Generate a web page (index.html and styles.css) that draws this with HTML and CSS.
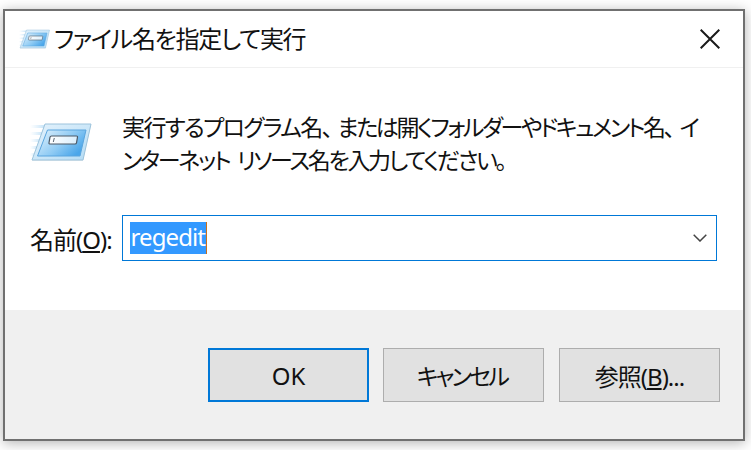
FILE: index.html
```html
<!DOCTYPE html>
<html lang="ja">
<head>
  <meta charset="UTF-8" />
  <meta name="viewport" content="width=device-width, initial-scale=1.0" />
  <title>ファイル名を指定して実行</title>
  <link rel="stylesheet" href="styles.css">
</head>
<body>
  <svg class="defs" width="0" height="0">
    <defs>
      <linearGradient id="frameFill" x1="0" y1="0" x2="1" y2="1">
        <stop offset="0" stop-color="#e4f2fc" />
        <stop offset="1" stop-color="#b4dcf5" />
      </linearGradient>
      <linearGradient id="panelFill" x1="0" y1="0" x2="1" y2="0.6">
        <stop offset="0" stop-color="#e6f4fd" />
        <stop offset="0.6" stop-color="#8fcbf4" />
        <stop offset="1" stop-color="#4aa6ea" />
      </linearGradient>
      <linearGradient id="fieldFill" x1="0" y1="0" x2="1" y2="0">
        <stop offset="0" stop-color="#ffffff" />
        <stop offset="1" stop-color="#d9eefc" />
      </linearGradient>
      <linearGradient id="streakFill" x1="0" y1="0" x2="1" y2="0">
        <stop offset="0" stop-color="#cfe8f9" stop-opacity="0" />
        <stop offset="1" stop-color="#bfe0f7" />
      </linearGradient>
      <symbol id="runIcon" viewBox="0 0 64 40">
        <rect x="0" y="3" width="16" height="3" fill="url(#streakFill)" />
        <rect x="0" y="10" width="14" height="3" fill="url(#streakFill)" />
        <rect x="0" y="17" width="12" height="3" fill="url(#streakFill)" />
        <rect x="0" y="24" width="9" height="3" fill="url(#streakFill)" />
        <rect x="0" y="31" width="7" height="3" fill="url(#streakFill)" />
        <path d="M15 2H61L53 38H2Z" fill="#d4d8dc" opacity="0.5" transform="translate(0 1)" />
        <path d="M15 2H61L53 38H2Z" fill="url(#frameFill)" stroke="#9cc3dc" stroke-width="1" stroke-linejoin="round" />
        <path d="M17.500 8H56L50 34H7.500Z" fill="url(#panelFill)" stroke="#5aa5de" stroke-width="1" />
        <path d="M21.500 14H46.500C47.300 14 47.700 14.400 47.500 15.200L46.500 20.800C46.300 21.600 45.900 22 45 22H20C19.200 22 18.800 21.600 19 20.800L20 15.200C20.200 14.400 20.600 14 21.500 14Z" fill="url(#fieldFill)" stroke="#4d5a68" stroke-width="1.200" />
        <path d="M24.300 16L23.300 20" stroke="#5a6672" stroke-width="1" fill="none" />
      </symbol>
    </defs>
  </svg>

  <div class="dialog">
    <div class="titlebar">
      <svg class="title-icon"><use href="#runIcon" /></svg>
      <span class="title-text">ファイル名を指定して実行</span>
      <svg class="close-icon" viewBox="0 0 20 20">
        <path d="M0.700 0.700L19.300 19.300M19.300 0.700L0.700 19.300" stroke="#1a1a1a" stroke-width="2" fill="none" />
      </svg>
    </div>

    <div class="content">
      <div class="message-row">
        <svg class="run-icon"><use href="#runIcon" /></svg>
        <p class="message">
          <span class="line">実行するプログラム名<span class="comma">、</span><span class="tight">または開くフォルダーやドキュメント名</span><span class="comma">、</span>イ</span>
          <span class="line line-second">ンターネット リソース名を入力してください。</span>
        </p>
      </div>
      <div class="field-row">
        <label class="field-label">名前(<u>O</u>):</label>
        <div class="combo">
          <span class="combo-value">regedit</span>
          <svg class="chevron" viewBox="0 0 14 8">
            <path d="M0.700 0.700L7 7L13.300 0.700" stroke="#444" stroke-width="1.500" fill="none" />
          </svg>
        </div>
      </div>
    </div>

    <div class="footer">
      <button class="btn btn-default">OK</button>
      <button class="btn btn-cancel">キャンセル</button>
      <button class="btn btn-browse">参照(<u>B</u>)...</button>
    </div>
  </div>
</body>
</html>
```

FILE: styles.css
```css
html, body {
  margin: 0;
  height: 100%;
}

body {
  background-color: #fff;
  overflow: hidden;
  font-family: "Noto Sans", "Noto Sans CJK JP", sans-serif;
  font-feature-settings: "palt";
  font-size: 24px;
  color: #111;
}

.defs {
  position: absolute;
}

.dialog {
  box-sizing: border-box;
  width: 742px;
  height: 432px;
  margin: 9px 0 0 3px;
  display: flex;
  flex-direction: column;
  background-color: #fff;
  border: 2px solid #707070;
  box-shadow: 0 2px 12px rgba(0, 0, 0, 0.3);
}

.titlebar {
  box-sizing: border-box;
  height: 57px;
  flex-shrink: 0;
  display: flex;
  align-items: center;
  padding: 0 23px 0 14px;
  border-bottom: 1px solid #f0f0f0;
}

.title-icon {
  width: 32px;
  height: 20px;
  margin-right: 3px;
}

.title-text {
  flex: 1;
  margin-bottom: 3px;
  letter-spacing: -1.300px;
}

.close-icon {
  width: 20px;
  height: 20px;
}

.content {
  flex: 1;
  padding: 0 26px 0 25px;
}

.message-row {
  display: flex;
  padding-top: 43px;
}

.run-icon {
  width: 64px;
  height: 40px;
  margin-top: 11px;
  flex-shrink: 0;
}

.message {
  margin: 0 0 0 28px;
  font-size: 23px;
  letter-spacing: -1.600px;
  line-height: 33px;
  white-space: nowrap;
}

.line {
  display: block;
}

.line-second {
  letter-spacing: -2.300px;
  word-spacing: 4px;
}

.tight {
  letter-spacing: -2.400px;
}

.comma {
  margin-right: 6px;
}

.field-row {
  display: flex;
  align-items: center;
  margin-top: 38px;
}

.field-label {
  width: 92px;
  flex-shrink: 0;
  letter-spacing: -1px;
}

.combo {
  box-sizing: border-box;
  width: 595px;
  height: 46px;
  display: flex;
  align-items: center;
  justify-content: space-between;
  padding: 0 9px 0 6.500px;
  border: 1.500px solid #0078d7;
}

.combo-value {
  height: 32px;
  line-height: 30px;
  margin-bottom: 1px;
  padding: 0 1px;
  letter-spacing: -0.900px;
  color: #fff;
  background-color: #3399ff;
  border-right: 1px solid #c8701e;
}

.chevron {
  width: 14px;
  height: 8px;
}

.footer {
  box-sizing: border-box;
  height: 129px;
  flex-shrink: 0;
  display: flex;
  justify-content: flex-end;
  gap: 14px;
  padding: 38px 23px 0 0;
  background-color: #f0f0f0;
}

.btn {
  box-sizing: border-box;
  width: 161px;
  height: 54px;
  padding: 0;
  font: inherit;
  font-feature-settings: inherit;
  color: #111;
  background-color: #e1e1e1;
  border: 1.500px solid #adadad;
}

.btn-default {
  border: 2px solid #0078d7;
}

.btn-cancel {
  padding-right: 3px;
  font-size: 23px;
  letter-spacing: -2.800px;
}

.btn-browse {
  margin-left: 1px;
  letter-spacing: -1px;
}
```
